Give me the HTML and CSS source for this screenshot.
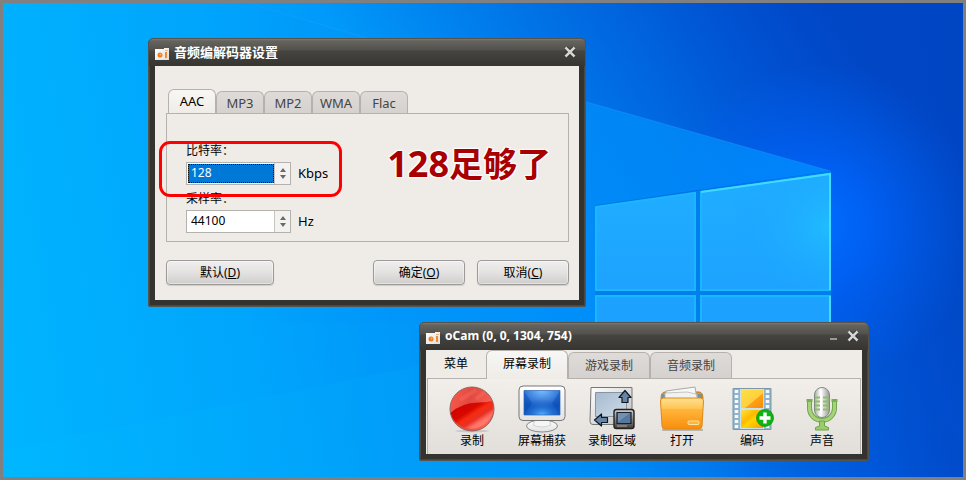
FILE: index.html
```html
<!DOCTYPE html>
<html lang="zh-CN">
<head>
<meta charset="utf-8">
<title>oCam</title>
<link rel="stylesheet" href="styles.css">
</head>
<body>
<svg width="0" height="0" class="defs" aria-hidden="true">
  <defs>
    <linearGradient id="camG" x1="0" y1="0" x2="1" y2="1"><stop offset="0" stop-color="#fff"/><stop offset="1" stop-color="#ddd"/></linearGradient>
    <symbol id="cam" viewBox="0 0 14 12">
      <path d="M0 1h9V0h5v12H0z" fill="url(#camG)"/>
      <circle cx="5" cy="7" r="2.500" fill="#ef7a1c"/><circle cx="5.500" cy="6.500" r="1" fill="#ffb067"/>
      <path d="M10 4h2v6h-2z" fill="#f28a2c"/><path d="M10 2h3v1h-3z" fill="#f7b37a"/>
    </symbol>
    <symbol id="close" viewBox="0 0 12 12">
      <path d="M2 2l8 8M10 2l-8 8" stroke="#222" stroke-width="4"/>
      <path d="M1.500 1.500l9 9M10.500 1.500l-9 9" stroke="#d4d4d2" stroke-width="2.600"/>
    </symbol>
  </defs>
</svg>
<main class="desktop">
  <svg class="wallpaper" viewBox="0 0 960 474" preserveAspectRatio="none" aria-hidden="true">
    <defs>
      <linearGradient id="sky" x1="0" y1="330" x2="960" y2="170" gradientUnits="userSpaceOnUse">
        <stop offset="0" stop-color="#00b4ff"/><stop offset=".25" stop-color="#00a5fc"/><stop offset=".5" stop-color="#0090f8"/>
        <stop offset=".7" stop-color="#007cf4"/><stop offset=".85" stop-color="#005ce8"/><stop offset=".93" stop-color="#004dd4"/><stop offset="1" stop-color="#0045c2"/>
      </linearGradient>
      <linearGradient id="topShade" x1="480" y1="190" x2="760" y2="-60" gradientUnits="userSpaceOnUse">
        <stop offset="0" stop-color="#0058d0" stop-opacity="0"/><stop offset="1" stop-color="#0046c4" stop-opacity=".9"/>
      </linearGradient>
      <radialGradient id="glow" cx="815" cy="220" r="160" gradientUnits="userSpaceOnUse">
        <stop offset="0" stop-color="#006eff"/><stop offset=".35" stop-color="#0066ff" stop-opacity=".7"/><stop offset="1" stop-color="#0060f0" stop-opacity="0"/>
      </radialGradient>
      <linearGradient id="beam" x1="245" y1="0" x2="828" y2="0" gradientUnits="userSpaceOnUse">
        <stop offset="0" stop-color="#0098fa" stop-opacity="0"/><stop offset=".3" stop-color="#0094fa" stop-opacity=".6"/><stop offset="1" stop-color="#0090ff" stop-opacity=".75"/>
      </linearGradient>
      <linearGradient id="lowBeam" x1="0" y1="474" x2="960" y2="474" gradientUnits="userSpaceOnUse">
        <stop offset="0" stop-color="#00bcff" stop-opacity=".3"/><stop offset=".6" stop-color="#009cf5" stop-opacity=".3"/><stop offset=".8" stop-color="#0064dc" stop-opacity=".5"/><stop offset="1" stop-color="#0048c4" stop-opacity=".3"/>
      </linearGradient>
      <linearGradient id="pane" x1="0" y1="0" x2="0" y2="1"><stop offset="0" stop-color="#20aeff"/><stop offset="1" stop-color="#1b9bff"/></linearGradient>
      <radialGradient id="paneHot" cx="1" cy=".45" r=".8"><stop offset="0" stop-color="#20bcff"/><stop offset="1" stop-color="#1c9eff" stop-opacity="0"/></radialGradient>
    </defs>
    <path fill="url(#sky)" d="M0 0h960v474H0z"/>
    <path fill="url(#topShade)" d="M0 0h960v474H0z"/>
    <path fill="url(#glow)" d="M600 20h360v420H600z"/>
    <path fill="url(#beam)" d="M245 0L580 98 827 168 592 202V320H245z"/>
    <path d="M245 0l122 36M580 98l247 70" stroke="#20a0ff" stroke-opacity=".4" fill="none"/>
    <path fill="url(#lowBeam)" d="M0 448L420 362 870 330 960 440V474H0z"/>
    <path fill="#0080ec" d="M592 203l236-35v212H592z"/>
    <path fill="url(#pane)" stroke="#1cb6ff" stroke-width="2" d="M593 204l99-14v97h-99zM698 189l129-18v116H698zM593 293h99v80h-99zM698 293h129v80H698z"/>
    <path fill="url(#paneHot)" d="M698 189l129-18v116H698z"/>
    <path stroke="#3fdcff" stroke-width="2" fill="none" d="M698 189l129-18v116M827 293v70"/>
  </svg>

  <section class="window codec" aria-label="音频编解码器设置">
    <header class="titlebar">
      <svg class="appicon"><use href="#cam"/></svg>
      <h1 class="title title-cjk">音频编解码器设置</h1>
      <button class="winbtn" aria-label="关闭"><svg class="x"><use href="#close"/></svg></button>
    </header>
    <div class="client codec-client">
      <div class="tabs codec-tabs" role="tablist">
        <button class="tab active" role="tab">AAC</button><button class="tab" role="tab">MP3</button><button class="tab" role="tab">MP2</button><button class="tab" role="tab">WMA</button><button class="tab" role="tab">Flac</button>
      </div>
      <div class="panel codec-panel">
        <div class="fields">
          <div class="field">
            <label for="bitrate">比特率：</label>
            <div class="row">
              <div class="spin"><input id="bitrate" class="selected" type="text" value="128"><span class="arrows"><button class="up" aria-label="增加"></button><button class="down" aria-label="减少"></button></span></div>
              <span class="unit">Kbps</span>
            </div>
          </div>
          <div class="field">
            <label for="rate">采样率：</label>
            <div class="row">
              <div class="spin"><input id="rate" type="text" value="44100"><span class="arrows"><button class="up" aria-label="增加"></button><button class="down" aria-label="减少"></button></span></div>
              <span class="unit">Hz</span>
            </div>
          </div>
        </div>
        <strong class="note"><span class="num">128</span>足够了</strong>
        <div class="highlight"></div>
      </div>
      <footer class="actions">
        <button class="btn wide">默认(<u>D</u>)</button>
        <button class="btn">确定(<u>O</u>)</button>
        <button class="btn">取消(<u>C</u>)</button>
      </footer>
    </div>
  </section>

  <section class="window recorder" aria-label="oCam">
    <header class="titlebar">
      <svg class="appicon"><use href="#cam"/></svg>
      <h1 class="title">oCam (0, 0, 1304, 754)</h1>
      <button class="winbtn" aria-label="最小化"><svg class="x" viewBox="0 0 12 12"><path d="M3 8h7v2H3z" fill="#9a9a98"/></svg></button>
      <button class="winbtn" aria-label="关闭"><svg class="x"><use href="#close"/></svg></button>
    </header>
    <div class="client rec-client">
      <div class="tabs rec-tabs" role="tablist">
        <button class="menu">菜单</button>
        <button class="tab active" role="tab">屏幕录制</button><button class="tab" role="tab">游戏录制</button><button class="tab" role="tab">音频录制</button>
      </div>
      <div class="panel toolbar">
        <button class="tool">
          <svg viewBox="0 0 48 48"><defs><linearGradient id="r1" x1="0" y1="0" x2="1" y2=".3"><stop offset="0" stop-color="#ff5a4c"/><stop offset=".5" stop-color="#e14a40"/><stop offset="1" stop-color="#f96054"/></linearGradient><linearGradient id="r2" x1="0" y1="0" x2="1" y2="1"><stop offset="0" stop-color="#c80000"/><stop offset=".4" stop-color="#d80800"/><stop offset=".5" stop-color="#f52c10"/><stop offset=".62" stop-color="#e83028"/><stop offset=".72" stop-color="#ff7064"/><stop offset="1" stop-color="#ff9488"/></linearGradient></defs>
            <ellipse cx="24" cy="46" rx="17" ry="1.500" fill="#000" opacity=".12"/><circle cx="24" cy="24" r="22" fill="url(#r1)"/><path d="M2.500 28Q13 18 30 17.500Q38 17.500 44.500 16A22 22 0 0 1 2.500 29Z" fill="url(#r2)"/><path d="M12 15L28 5M28 14l9-7" stroke="#ff8176" stroke-width="4" opacity=".25"/><circle cx="24" cy="24" r="22" fill="none" stroke="#8f6460"/></svg>
          <span>录制</span></button>
        <button class="tool">
          <svg viewBox="0 0 48 48"><defs><linearGradient id="m1" x1="0" y1="0" x2="0" y2="1"><stop offset="0" stop-color="#fff"/><stop offset="1" stop-color="#e2e2e2"/></linearGradient><radialGradient id="m2" cx=".5" cy="0" r=".7"><stop offset="0" stop-color="#7bbcff"/><stop offset="1" stop-color="#1158c4"/></radialGradient><radialGradient id="m3" cx=".5" cy="1" r=".65"><stop offset="0" stop-color="#56b4ff"/><stop offset="1" stop-color="#0c4db8" stop-opacity="0"/></radialGradient></defs>
            <ellipse cx="24" cy="41" rx="15.500" ry="6" fill="url(#m1)" stroke="#8b8b8b"/><path d="M17 35h14l2 5q-9 4-18 0z" fill="#f6f6f6" stroke="#bbb" stroke-width=".6"/><rect x="1" y="1" width="46" height="34.500" rx="4" fill="url(#m1)" stroke="#777"/><path d="M6 5.500h36V30H6z" fill="url(#m2)"/><path d="M6 5.500h36V30H6z" fill="url(#m3)"/><path d="M6 6l8 12-8 12M42 6l-8 12 8 12" fill="#0748ad" opacity=".4"/><path d="M6 5.500h36V30H6z" fill="none" stroke="#2a63b4" stroke-width=".7"/></svg>
          <span>屏幕捕获</span></button>
        <button class="tool">
          <svg viewBox="0 0 48 48"><defs><linearGradient id="g1" x1="0" y1="0" x2="1" y2="1"><stop offset="0" stop-color="#fff"/><stop offset="1" stop-color="#bebebe"/></linearGradient><linearGradient id="g2" x1="0" y1="0" x2="1" y2="1"><stop offset="0" stop-color="#a5bbd0"/><stop offset="1" stop-color="#cfdbe6"/></linearGradient><linearGradient id="g3" x1="0" y1="0" x2="0" y2="1"><stop offset="0" stop-color="#d4d0cc"/><stop offset="1" stop-color="#403c3c"/></linearGradient></defs>
            <path d="M3 2.500h41v34q0 3-3 3H5q-3 0-3-3z" fill="url(#g1)" stroke="#777"/><path d="M7.500 7.500h31v24h-31z" fill="url(#g2)" stroke="#8994a0"/><path d="M37 5.500l6 7h-3v5h-6v-5h-3z" fill="#6584a8" stroke="#101820" stroke-width="1.200" stroke-linejoin="round"/><path d="M6.500 35l7-6v3.500h6v5h-6V41z" fill="#6584a8" stroke="#101820" stroke-width="1.200" stroke-linejoin="round"/><rect x="26" y="24.500" width="20" height="19" rx="2.500" fill="url(#g3)" stroke="#252222" stroke-width="1.400"/><path d="M29 27.500h14v11H29z" fill="#58779c" stroke="#16202c" stroke-width="1.200"/><path d="M30 37l12-9H30z" fill="#7290b2"/><path d="M29 41h10" stroke="#aaa"/></svg>
          <span>录制区域</span></button>
        <button class="tool">
          <svg viewBox="0 0 48 48"><defs><linearGradient id="f1" x1="0" y1="0" x2="0" y2="1"><stop offset="0" stop-color="#ffe092"/><stop offset=".35" stop-color="#ffc452"/><stop offset=".36" stop-color="#ffb63c"/><stop offset="1" stop-color="#f98d0c"/></linearGradient></defs>
            <path d="M4 45h41" stroke="#000" opacity=".2" stroke-width="2"/><path d="M3 14q0-7 4-7h34q4 0 4 7z" fill="#e9962b" stroke="#b67928"/><path d="M4 9h4v5H4zM40 9h4v5h-4z" fill="#789399"/><path d="M8 6l29-4 2 12H8z" fill="#f8f8f6" stroke="#a8a8a8"/><path d="M7 8l22-1 9 2 2 6H7z" fill="#f2f2f0" stroke="#b8b8b8" stroke-width=".8"/><path d="M2.500 16q0-3 3-3h37q3 0 3 3L44 41q0 3-3 3H7q-3 0-3-3z" fill="url(#f1)" stroke="#dc8a18"/><rect x="30" y="36" width="11" height="3.500" rx="1" fill="#ffb340" stroke="#ffe39e"/></svg>
          <span>打开</span></button>
        <button class="tool">
          <svg viewBox="0 0 48 48"><defs><linearGradient id="v1" x1="0" y1="0" x2="1" y2="1"><stop offset="0" stop-color="#ffdf45"/><stop offset=".58" stop-color="#ffd03c"/><stop offset=".6" stop-color="#ffa216"/><stop offset="1" stop-color="#f88908"/></linearGradient><linearGradient id="v2" x1="0" y1="0" x2="1" y2="1"><stop offset="0" stop-color="#ffe438"/><stop offset=".4" stop-color="#ffb800"/><stop offset=".55" stop-color="#ffd500"/><stop offset="1" stop-color="#ff9a00"/></linearGradient></defs>
            <path d="M5 3.500h38v41H5z" fill="#8fb4cc" stroke="#7b97aa"/><path d="M12 4h24v40H12z" fill="#c9e2ef"/><path d="M13 5h22v18H13z" fill="url(#v1)"/><path d="M13 25h22v18H13z" fill="url(#v2)"/><path d="M8.500 5v39M39.500 5v39" stroke="#f4fafc" stroke-width="3.500" stroke-dasharray="3 2"/><circle cx="37" cy="33" r="8.500" fill="#0cb414" stroke="#078a0e" stroke-width=".7"/><path d="M31.500 33h11M37 27.500v11" stroke="#fff" stroke-width="3.400"/></svg>
          <span>编码</span></button>
        <button class="tool">
          <svg viewBox="0 0 48 48"><defs><linearGradient id="a1" x1="0" y1="0" x2="1" y2="0"><stop offset="0" stop-color="#aaa"/><stop offset=".4" stop-color="#fff"/><stop offset="1" stop-color="#999"/></linearGradient></defs>
            <path d="M11.500 15v8a12.500 12.500 0 0 0 25 0v-8" fill="none" stroke="#6ea249" stroke-width="5"/><path d="M11.500 15v8a12.500 12.500 0 0 0 25 0v-8" fill="none" stroke="#a5d377" stroke-width="3.200"/><path d="M8.500 15.500h6M33.500 15.500h6" stroke="#7aae52" stroke-width="3"/><path d="M21.500 36h5v5l4 1.500V45h-13v-2.500l4-1.500z" fill="#9acb6d" stroke="#6ea249"/><rect x="16.500" y="2.500" width="15" height="30" rx="7.500" fill="url(#a1)" stroke="#7f8b7a"/><path d="M17 12.500h5M17 16.500h5M17 20.500h5M17 24.500h5M25 12.500h6M25 16.500h6M25 20.500h6M25 24.500h6" stroke="#8cc060" stroke-width="1.800"/><path d="M23.500 6v23" stroke="#fff" stroke-width="1.500"/></svg>
          <span>声音</span></button>
      </div>
    </div>
  </section>
</main>
</body>
</html>
```
FILE: styles.css
```css
* { box-sizing: border-box; }
body { margin: 0; font: 12px/16px "Noto Sans", "Noto Sans CJK SC", sans-serif; color: #000; }
button, input { font: inherit; color: inherit; margin: 0; padding: 0; border: 0; background: none; }
h1 { margin: 0; }
.defs { position: absolute; }
.desktop { position: relative; min-height: 100vh; border: 3px solid #808080; background: #0090f8; overflow: hidden; }
.wallpaper { position: absolute; inset: 0; width: 100%; height: 100%; display: block; }

.window {
  position: absolute; padding: 0 6px 6px; border: 1px solid #55534e; border-radius: 5px 5px 2px 2px;
  background: #35332f; box-shadow: inset 0 0 0 1px #4a4843;
}
.codec { left: 145px; top: 35px; width: 438px; }
.recorder { left: 416px; top: 319px; width: 450px; }
.titlebar {
  display: flex; align-items: center; height: 27px; margin: 0 -6px; padding: 0 5px 2px 6px; border-radius: 4px 4px 0 0;
  background: linear-gradient(#7b7a75 0, #64635e 2px, #52514c 11px, #454440 12px, #383632 26px);
}
.appicon { width: 14px; height: 12px; margin-top: 4px; }
.title { flex: 1; padding-left: 5px; font-size: 12px; line-height: 16px; font-weight: 700; color: #fff; }
.title-cjk { font-size: 13px; }
.winbtn { width: 20px; height: 20px; display: grid; place-items: center; }
.x { width: 12px; height: 12px; display: block; }
.client { background: #efece7; }

.tabs { display: flex; align-items: flex-end; position: relative; }
.tab {
  height: 22px; border: 1px solid #b5b2ae; border-bottom: 0; border-radius: 6px 6px 0 0;
  background: linear-gradient(#dedbd9, #d5d1ce); color: #444;
}
.tab.active { height: 25px; margin-bottom: -1px; background: linear-gradient(#f8f7f6, #efece7); color: #000; padding-bottom: 2px; }
.panel { border: 1px solid #b5b2ae; }

.codec-client { padding: 23px 10px 15px 11px; }
.codec-tabs { padding-left: 2px; }
.codec-tabs .tab { width: 48px; font-size: 13px; }
.codec-panel { position: relative; display: flex; align-items: flex-start; padding: 29px 17px 8px 19px; }
.fields { flex: 1; display: grid; gap: 6px; }
.field { display: grid; gap: 3px; }
.field label { line-height: 16px; }
.row { display: flex; align-items: center; gap: 7px; }
.unit { font-size: 13px; line-height: 18px; padding-bottom: 2px; }
.spin { display: flex; width: 105px; height: 23px; border: 1px solid #b5b2ae; background: #fff; padding: 1px 0 1px 1px; }
.spin input { flex: 1; min-width: 0; padding: 0 3px 2px; }
.spin input.selected { background: #0078d7; color: #fff; outline: 1px dotted #111; outline-offset: -1px; }
.arrows { width: 16px; margin: -1px 0; border-left: 1px solid #c8c5c1; background: #f4f2f0; display: flex; flex-direction: column; align-items: center; justify-content: center; gap: 3px; }
.up, .down { width: 0; height: 0; border: 3px solid transparent; }
.up { border-top: 0; border-bottom: 4px solid #6a6a6a; }
.down { border-bottom: 0; border-top: 4px solid #6a6a6a; }
.note {
  font: 700 34px/40px "Noto Sans CJK SC", sans-serif; color: #a80000;
  text-shadow: 0 0 2px #fff, 1px 1px 1px #fff, -1px -1px 1px #fff, 1px -1px 1px #fff, -1px 1px 1px #fff;
}
.num { font-family: "Noto Sans", sans-serif; font-size: 36px; }
.highlight { position: absolute; left: -8px; top: 27px; width: 183px; height: 56px; border: 3px solid #f00; border-radius: 11px; }
.actions { display: flex; gap: 12px; margin-top: 18px; }
.btn {
  width: 92px; height: 25px; border: 1px solid #9d9b99; border-radius: 4px;
  background: linear-gradient(#f0efee, #e3e2e1 50%, #cfcecd); box-shadow: inset 0 0 0 1px #ffffff66, 0 1px 1px #0002;
}
.btn.wide { width: 108px; margin-right: auto; }

.menu { width: 60px; height: 28px; }
.rec-tabs .tab { width: 82px; height: 26px; }
.rec-tabs .tab.active { height: 29px; }
.toolbar { display: flex; margin: 0 1px; padding: 6px 3px 5px 9px; border-bottom: 0; background: linear-gradient(#f2efeb, #e2deda); }
.tool { flex: 0 0 70px; display: flex; flex-direction: column; align-items: center; }
.tool svg { width: 48px; height: 48px; }
.tool span { line-height: 16px; white-space: nowrap; }
```
